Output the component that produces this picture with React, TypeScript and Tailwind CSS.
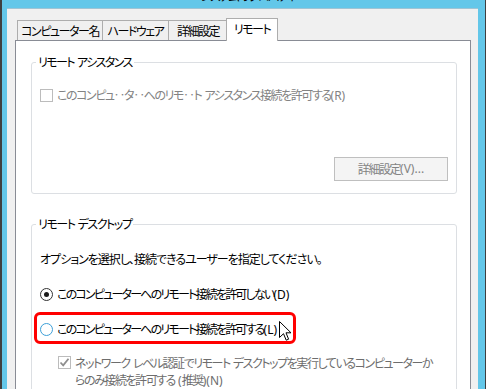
import React from 'react';

const font =
  "font-['Noto_Sans_CJK_JP','Noto_Sans',sans-serif] [font-feature-settings:'palt'] whitespace-nowrap";

// Japanese runs are set tight (like Meiryo UI), ASCII runs keep normal spacing
const T: React.FC<{ children: string; tr?: string }> = ({ children, tr = 'tracking-[-1.45px]' }) => (
  <>
    {children.split(/([\x20-\x7e]+)/).map((part, i) =>
      /^[\x20-\x7e]+$/.test(part) ? (
        <span key={i} className="font-['Noto_Sans',sans-serif] tracking-normal whitespace-pre">
          {part}
        </span>
      ) : (
        <span key={i} className={tr}>
          {part}
        </span>
      )
    )}
  </>
);

const CheckBox: React.FC<{ checked?: boolean }> = ({ checked }) => (
  <span className="flex-none w-[13px] h-[13px] border border-[#bcbcbc] bg-white flex items-center justify-center">
    {checked && (
      <svg width="11" height="11" viewBox="0 0 11 11">
        <path d="M1.5 5.5 L4.2 8.3 L9.5 1.8" fill="none" stroke="#8e8e8e" strokeWidth="1.8" />
      </svg>
    )}
  </span>
);

const Radio: React.FC<{ checked?: boolean; hover?: boolean }> = ({ checked, hover }) => (
  <span
    className={
      'flex-none w-[13px] h-[13px] rounded-full border bg-white flex items-center justify-center ' +
      (hover ? 'border-[#3c9fd8]' : 'border-[#333333]')
    }
  >
    {checked && <span className="w-[5px] h-[5px] rounded-full bg-[#1a1a1a]" />}
  </span>
);

export default function App() {
  return (
    <div className={`w-[486px] h-[389px] overflow-hidden bg-[#3f3f3f] flex pl-[2px] pr-[1px] relative ${font} text-[12px] leading-[16px]`}>
      <div className="flex-1 bg-[#63c7e9] flex flex-col px-[5px] pr-[7px]">
        {/* title bar, only the bottom of the caption is visible */}
        <div className="h-[8px] flex-none overflow-hidden flex justify-center pl-[10px]">
          <span className="mt-[-12px] text-black">
            <T>システムのプロパティ</T>
          </span>
        </div>

        <div className="flex-1 bg-[#f0f0f0] border-t border-[#9fc4d4] flex flex-col pl-[8px] pr-[7px] pt-[8px]">
          {/* tabs */}
          <div className="flex items-end pl-[2px] h-[23px]">
            <div className="w-[86px] h-[20px] border border-b-0 border-[#adadad] flex items-center justify-center text-black">
              <T>コンピューター名</T>
            </div>
            <div className="w-[66px] h-[20px] border-t border-r border-[#adadad] flex items-center justify-center text-black">
              <T>ハードウェア</T>
            </div>
            <div className="w-[59px] h-[20px] border-t border-r border-[#adadad] flex items-center justify-center text-black">
              <T>詳細設定</T>
            </div>
            <div className="relative z-10 -ml-[2px] -mb-[1px] w-[52px] h-[23px] border border-b-0 border-[#adadad] bg-white flex items-start justify-center pt-[2px] text-black">
              <T>リモート</T>
            </div>
          </div>

          {/* panel */}
          <div className="flex-1 bg-white border border-[#898c95] pl-[15px] pr-[13px] pt-[13px]">
            <fieldset className="border border-[#dcdfe3] rounded-[3px] p-0 m-0">
              <legend className="ml-[4px] px-[2px] text-black">
                <T tr="tracking-[-1.6px]">リモート アシスタンス</T>
              </legend>
              <div className="pl-[8px] pr-[8px] pb-[12px]">
                <div className="flex items-center gap-[4px] mt-[16px] h-[16px] text-[#838383]">
                  <CheckBox />
                  <span>
                    <T>このコンピュ‥タ‥へのリモ‥ト アシスタンス接続を許可する(R)</T>
                  </span>
                </div>
                <div className="flex justify-end mt-[54px]">
                  <div className="w-[114px] h-[24px] border border-[#bfbfbf] bg-[#f4f4f4] flex items-center justify-center text-[#838383]">
                    <T>詳細設定(V)...</T>
                  </div>
                </div>
              </div>
            </fieldset>

            <fieldset className="border border-[#dcdfe3] rounded-[3px] p-0 m-0 mt-[22px]">
              <legend className="ml-[4px] px-[2px] text-black">
                <T>リモート デスクトップ</T>
              </legend>
              <div className="pl-[8px] pr-[8px] pb-[12px] text-black">
                <div className="mt-[18px]">
                  <T tr="tracking-[-1px]">オプションを選択し、接続できるユーザーを指定してください。</T>
                </div>
                <div className="flex items-center gap-[4px] mt-[19px] h-[16px]">
                  <Radio checked />
                  <span>
                    <T tr="tracking-[-1.8px]">このコンピューターへのリモート接続を許可しない(D)</T>
                  </span>
                </div>
                <div className="flex items-center gap-[4px] mt-[19px] h-[16px]">
                  <Radio hover />
                  <span>
                    <T tr="tracking-[-1.8px]">このコンピューターへのリモート接続を許可する(L)</T>
                  </span>
                </div>
                <div className="flex items-start gap-[4px] mt-[18px] pl-[18px] text-[#6d6d6d]">
                  <span className="mt-[1px]">
                    <CheckBox checked />
                  </span>
                  <span>
                    <T>ネットワーク レベル認証でリモート デスクトップを実行しているコンピューターか</T>
                    <br />
                    <T>らのみ接続を許可する (推奨)(N)</T>
                  </span>
                </div>
              </div>
            </fieldset>
          </div>
        </div>
      </div>

      {/* red annotation frame */}
      <div className="absolute left-[34px] top-[312px] w-[262px] h-[32px] border-[3px] border-[#ff0000] rounded-[6px]" />

      {/* mouse pointer */}
      <svg className="absolute left-[279px] top-[321px]" width="13" height="21" viewBox="0 0 13 21">
        <path d="M0.5 0.5 L0.5 16.5 L4.5 12.7 L7.2 19.2 L9.6 18.2 L7 11.8 L12 11.8 Z" fill="#ffffff" stroke="#000000" strokeWidth="1" strokeLinejoin="miter" />
      </svg>
    </div>
  );
}
